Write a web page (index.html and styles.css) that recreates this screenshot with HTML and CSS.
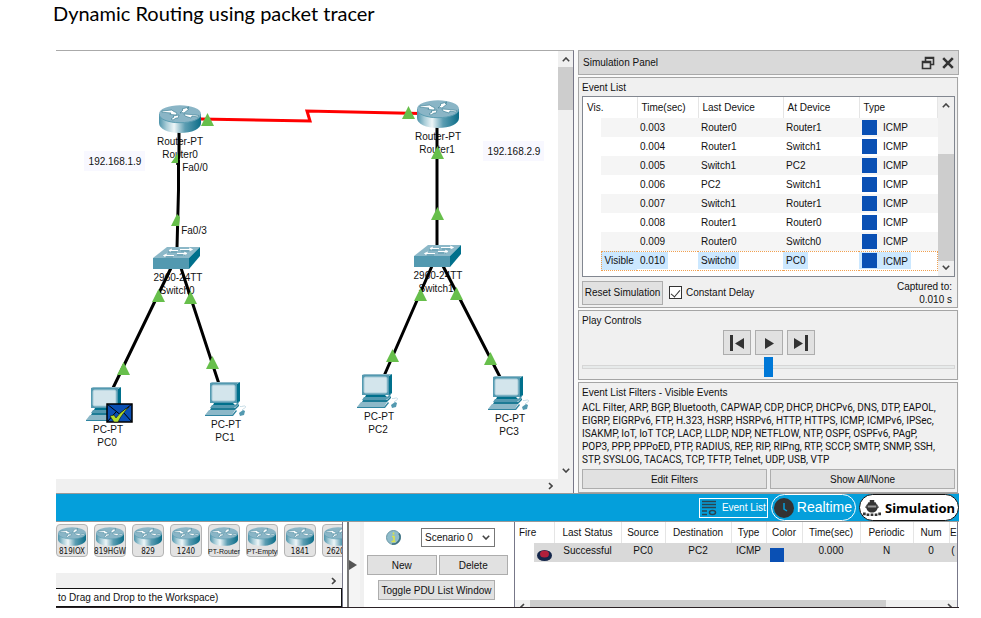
FILE: index.html
```html
<!DOCTYPE html>
<html lang="en">
<head>
<meta charset="utf-8">
<title>Dynamic Routing using packet tracer</title>
<link rel="stylesheet" href="styles.css">
</head>
<body>
<svg width="0" height="0" class="defs" aria-hidden="true">
  <defs>
    <linearGradient id="metal" x1="0" x2="1" y1="0" y2="0">
      <stop offset="0" stop-color="#4d93aa"/>
      <stop offset=".18" stop-color="#a9cdd8"/>
      <stop offset=".36" stop-color="#eef6f8"/>
      <stop offset=".62" stop-color="#5c9db2"/>
      <stop offset="1" stop-color="#0b6d88"/>
    </linearGradient>
    <symbol id="router" viewBox="0 0 42 28">
      <path d="M0 9v9c0 6 9 10 21 10s21-4 21-10V9z" fill="url(#metal)"/>
      <ellipse cx="21" cy="9" rx="21" ry="8.700" fill="#8ab5c6"/>
      <path d="M0 9c0 5 9 8.700 21 8.700S42 14 42 9" fill="none" stroke="#5b9db2" stroke-width="1"/>
      <g fill="#fff" stroke="#31788f" stroke-width=".6">
        <path d="M3 6l10-1 1 1 4 2-1 2-6-.6 1-1.400-9-.8z"/>
        <path d="M21 8l3-3-1-1 7-2-2 1.500 2 .5-5 4-2-.5z"/>
        <path d="M25 9l7 .5 8 1-1 1.500-6-1-1 2-6-2z"/>
        <path d="M12 14l3-2-1-1 6-1-1 3-2 0-3 2z"/>
      </g>
    </symbol>
    <symbol id="switch" viewBox="0 0 47 22">
      <path d="M0 11L14 0h33L36 11z" fill="#8cb8c8"/>
      <path d="M0 11h36v11H0z" fill="#5399b0"/>
      <path d="M36 11L47 0v9L36 22z" fill="#00708c"/>
      <g fill="none" stroke="#fff" stroke-width="1">
        <path d="M16 3.500h9M19 2l-3 1.500 2 1.500M27 2.500h12M36 1l3.500 1.500L36 4"/>
        <path d="M11 8.500h10M14 7l-3.500 1.500L13 10M24 6.500h9M31 5l3 1.500-4 1.500"/>
      </g>
      <path d="M15 5h9M28 4h9M12 10h8M24 8h8" stroke="#2f7a92" stroke-width=".5"/>
    </symbol>
    <symbol id="pc" viewBox="0 0 42 34">
      <path d="M5 1l2-1h28l-3 2z" fill="#8cb8c8"/>
      <path d="M5 1h27v20H5z" fill="#5399b0"/>
      <path d="M32 2l3-2v19l-3 3z" fill="#00708c"/>
      <rect x="7" y="3" width="23" height="16" rx="1.500" fill="#d3e5ec" stroke="#a6cad7"/>
      <path d="M9 21h19l2 2H8z" fill="#00708c"/>
      <path d="M7 23h23l4-4-1 4-4 3H5z" fill="#5399b0"/>
      <path d="M6 26h24l4-4v2l-4 4H5z" fill="#1d7b95"/>
      <path d="M4 28h26l-3 5H0z" fill="#8cb8c8"/>
      <path d="M0 33h27l4-5 1 1-4 5H0z" fill="#2f84a0"/>
      <path d="M34 31l4-3 2 1-1 4-4 1z" fill="#5399b0"/>
      <path d="M37 28c2-2 4-2 3.500-3.500S37 25 35 24.500" fill="none" stroke="#b7d3de" stroke-width=".8"/>
    </symbol>
    <symbol id="up" viewBox="0 0 13 13"><path d="M6.500 0L13 13H0z" fill="#67bf4b"/></symbol>
    <symbol id="chev" viewBox="0 0 8 5"><path d="M.8.800L4 4 7.200.800" fill="none" stroke="#444" stroke-width="1.600"/></symbol>
  </defs>
</svg>

<h1>Dynamic Routing using packet tracer</h1>

<main class="app">
  <div class="upper">
    <section class="workspace" aria-label="Workspace">
      <div class="canvas">
        <svg width="502" height="427" viewBox="56 51 502 427">
          <rect x="84" y="151" width="61" height="20" fill="#f8f8ff"/>
          <rect x="483" y="141" width="61" height="20" fill="#f8f8ff"/>
          <g class="labels">
            <text x="115" y="165">192.168.1.9</text>
            <text x="514" y="155">192.168.2.9</text>
            <text x="180" y="145">Router-PT</text>
            <text x="180" y="158">Router0</text>
            <text x="438" y="140">Router-PT</text>
            <text x="437" y="153">Router1</text>
            <text x="178" y="281">2960-24TT</text>
            <text x="177" y="294">Switch0</text>
            <text x="438" y="279">2960-24TT</text>
            <text x="436" y="292">Switch1</text>
            <text x="108" y="433">PC-PT</text>
            <text x="107" y="446">PC0</text>
            <text x="226" y="428">PC-PT</text>
            <text x="225" y="441">PC1</text>
            <text x="379" y="420">PC-PT</text>
            <text x="378" y="433">PC2</text>
            <text x="510" y="422">PC-PT</text>
            <text x="509" y="435">PC3</text>
          </g>
          <rect x="181" y="158" width="30" height="15" fill="#fff"/>
          <g fill="none" stroke="#000" stroke-width="3">
            <path d="M179 130V155L177.500 165M178.500 160V190L177 248"/>
            <path d="M437 125V248"/>
            <path d="M171 268L113 388M181 268L219 384"/>
            <path d="M432 266L384 376M443 266L500 377"/>
          </g>
          <path d="M200 119L310 121 307 111 420 113.500" fill="none" stroke="#f00" stroke-width="3"/>
          <g class="labels">
            <text x="195" y="171">Fa0/0</text>
            <text x="194" y="234">Fa0/3</text>
          </g>
          <use href="#router" x="159" y="105" width="42" height="28"/>
          <use href="#router" x="417" y="100" width="42" height="28"/>
          <use href="#switch" x="153" y="247" width="47" height="22"/>
          <use href="#switch" x="414" y="245" width="47" height="22"/>
          <use href="#pc" x="86" y="387" width="42" height="34"/>
          <use href="#pc" x="205" y="382" width="42" height="34"/>
          <use href="#pc" x="357" y="374" width="42" height="34"/>
          <use href="#pc" x="488" y="376" width="42" height="34"/>
          <path d="M178 153v10h-7zM177 214l3 3-1 9h-8z" fill="#67bf4b"/>
          <use href="#up" x="201" y="113" width="13" height="13"/>
          <use href="#up" x="402" y="106" width="13" height="13"/>
          <use href="#up" x="431" y="146" width="13" height="13"/>
          <use href="#up" x="431" y="207" width="13" height="13"/>
          <use href="#up" x="152" y="289" width="13" height="13"/>
          <use href="#up" x="184" y="291" width="13" height="13"/>
          <use href="#up" x="117" y="362" width="13" height="13"/>
          <use href="#up" x="206" y="356" width="13" height="13"/>
          <use href="#up" x="414" y="288" width="13" height="13"/>
          <use href="#up" x="450" y="287" width="13" height="13"/>
          <use href="#up" x="386" y="349" width="13" height="13"/>
          <use href="#up" x="484" y="352" width="13" height="13"/>
          <rect x="107" y="404" width="25" height="18" fill="#0a4fb3" stroke="#000" stroke-width="1.500"/>
          <path d="M107 404l12.500 10L132 404M107 422l9-10M132 422l-9-10" fill="none" stroke="#000"/>
          <path d="M110 416l4-1 2 3c3-4 7-8 13-11-5 5-8 9-11 15h-4z" fill="#b2dc2c" stroke="#000" stroke-width=".5"/>
        </svg>
      </div>
      <div class="vscroll">
        <svg width="8" height="5" class="flip"><use href="#chev"/></svg>
        <div class="vthumb short"></div>
        <svg width="8" height="5"><use href="#chev"/></svg>
      </div>
      <div class="hscroll"><svg width="5" height="8" viewBox="0 0 5 8"><path d="M1 1l3 3-3 3" fill="none" stroke="#444" stroke-width="1.600"/></svg></div>
    </section>

    <aside class="panel">
      <header class="titlebar">
        <h2>Simulation Panel</h2>
        <button class="plain" aria-label="Undock"><svg width="14" height="14" viewBox="0 0 14 14"><path d="M4.500 5V1.500h8v7H10M4.500 2.300h8M1.500 5.500h8v7h-8zM1.500 6.500h8" fill="none" stroke="#333" stroke-width="1.600"/></svg></button>
        <button class="plain" aria-label="Close"><svg width="12" height="12" viewBox="0 0 12 12"><path d="M1.200 1.200l9.600 9.600M10.800 1.200l-9.600 9.600" stroke="#333" stroke-width="2.600"/></svg></button>
      </header>

      <section class="box events">
        <h3>Event List</h3>
        <div class="listframe">
          <table class="eventtable">
            <colgroup><col class="c-in"><col class="c-vis"><col class="c-time"><col class="c-last"><col class="c-at"><col class="c-type"></colgroup>
            <thead><tr><th colspan="2">Vis.</th><th>Time(sec)</th><th>Last Device</th><th>At Device</th><th>Type</th></tr></thead>
            <tbody>
              <tr><td></td><td></td><td>0.003</td><td>Router0</td><td>Router1</td><td><i class="swatch"></i><span>ICMP</span></td></tr>
              <tr><td></td><td></td><td>0.004</td><td>Router1</td><td>Switch1</td><td><i class="swatch"></i><span>ICMP</span></td></tr>
              <tr><td></td><td></td><td>0.005</td><td>Switch1</td><td>PC2</td><td><i class="swatch"></i><span>ICMP</span></td></tr>
              <tr><td></td><td></td><td>0.006</td><td>PC2</td><td>Switch1</td><td><i class="swatch"></i><span>ICMP</span></td></tr>
              <tr><td></td><td></td><td>0.007</td><td>Switch1</td><td>Router1</td><td><i class="swatch"></i><span>ICMP</span></td></tr>
              <tr><td></td><td></td><td>0.008</td><td>Router1</td><td>Router0</td><td><i class="swatch"></i><span>ICMP</span></td></tr>
              <tr><td></td><td></td><td>0.009</td><td>Router0</td><td>Switch0</td><td><i class="swatch"></i><span>ICMP</span></td></tr>
              <tr class="current"><td></td><td>Visible</td><td><b>0.010</b></td><td><b>Switch0</b></td><td><b>PC0</b></td><td><b><i class="swatch"></i><span>ICMP</span></b></td></tr>
            </tbody>
          </table>
          <div class="vscroll">
            <svg width="8" height="5" class="flip"><use href="#chev"/></svg>
            <div class="vthumb low"></div>
            <svg width="8" height="5"><use href="#chev"/></svg>
          </div>
        </div>
        <div class="resetrow">
          <button class="btn">Reset Simulation</button>
          <label class="check"><input type="checkbox" checked><span>Constant Delay</span></label>
          <p class="captured">Captured to:<br>0.010 s</p>
        </div>
      </section>

      <section class="box play">
        <h3>Play Controls</h3>
        <div class="playrow">
          <button class="btn" aria-label="Step back"><svg width="14" height="16" viewBox="0 0 14 16"><path d="M0 0h3v16H0zM14 3v11L5 8.500z" fill="#333"/></svg></button>
          <button class="btn" aria-label="Play"><svg width="14" height="16" viewBox="0 0 14 16"><path d="M3 3v11l9-5.500z" fill="#333"/></svg></button>
          <button class="btn" aria-label="Step forward"><svg width="14" height="16" viewBox="0 0 14 16"><path d="M0 3v11l9-5.500zM11 0h3v16h-3z" fill="#333"/></svg></button>
        </div>
        <input class="speed" type="range" min="0" max="100" value="50" aria-label="Play speed">
      </section>

      <section class="box filters">
        <h3>Event List Filters - Visible Events</h3>
        <p>ACL Filter, ARP, BGP, Bluetooth, CAPWAP, CDP, DHCP, DHCPv6, DNS, DTP, EAPOL,<br>EIGRP, EIGRPv6, FTP, H.323, HSRP, HSRPv6, HTTP, HTTPS, ICMP, ICMPv6, IPSec,<br>ISAKMP, IoT, IoT TCP, LACP, LLDP, NDP, NETFLOW, NTP, OSPF, OSPFv6, PAgP,<br>POP3, PPP, PPPoED, PTP, RADIUS, REP, RIP, RIPng, RTP, SCCP, SMTP, SNMP, SSH,<br>STP, SYSLOG, TACACS, TCP, TFTP, Telnet, UDP, USB, VTP</p>
        <div class="filterbtns"><button class="btn">Edit Filters</button><button class="btn">Show All/None</button></div>
      </section>
    </aside>
  </div>

  <nav class="modebar">
    <button class="eventlist"><svg width="15" height="16" viewBox="0 0 15 16"><path d="M0 1.500h14M0 4.500h14M0 7.500h14M0 11h5M0 14.500h5" stroke="#2b4450" stroke-width="1.500"/><ellipse cx="10.500" cy="12.500" rx="3" ry="2" fill="none" stroke="#2b4450" stroke-width="1.500"/></svg>Event List</button>
    <button class="mode realtime"><svg width="20" height="20" viewBox="0 0 20 20"><circle cx="10" cy="10" r="10" fill="#333"/><path d="M10 5v6l3 2" fill="none" stroke="#079fdb" stroke-width="1.500"/></svg>Realtime</button>
    <button class="mode simulation"><svg width="18" height="18" viewBox="0 0 20 18"><path d="M7.500 0h5v2.500h-5zM6 2.500h8l2 4H4zM4 9h12c0 3-2.500 5-6 5s-6-2-6-5z" fill="#333"/><path d="M4.500 5.500v4M15.500 5.500v4M2.500 8h15" stroke="#333" stroke-width="1.500"/><path d="M0 14h3v3H0zM4 15h3v3H4zM8.500 15h3v3h-3zM13 15h3v3h-3zM17 14h3v3h-3z" fill="#333"/></svg>Simulation</button>
  </nav>

  <div class="lower">
    <section class="devices">
      <div class="tiles">
        <button class="tile"><svg width="28" height="19"><use href="#router"/></svg>819IOX</button>
        <button class="tile"><svg width="28" height="19"><use href="#router"/></svg>819HGW</button>
        <button class="tile"><svg width="28" height="19"><use href="#router"/></svg>829</button>
        <button class="tile"><svg width="28" height="19"><use href="#router"/></svg>1240</button>
        <button class="tile long"><svg width="28" height="19"><use href="#router"/></svg>PT-Router</button>
        <button class="tile long"><svg width="28" height="19"><use href="#router"/></svg>PT-Empty</button>
        <button class="tile"><svg width="28" height="19"><use href="#router"/></svg>1841</button>
        <button class="tile"><svg width="28" height="19"><use href="#router"/></svg>2620X</button>
      </div>
      <div class="hscroll"><svg width="5" height="8" viewBox="0 0 5 8"><path d="M1 1l3 3-3 3" fill="none" stroke="#444" stroke-width="1.600"/></svg></div>
      <p class="hint">to Drag and Drop to the Workspace)</p>
    </section>
    <button class="handle" aria-label="Expand"><svg width="8" height="10" viewBox="0 0 8 10"><path d="M0 0l8 5-8 5z" fill="#555"/></svg></button>
    <section class="scenario">
      <div class="row">
        <svg width="15" height="15" viewBox="0 0 15 15"><circle cx="7.500" cy="7.500" r="7" fill="#8fbccb" stroke="#6b97a5"/><path d="M13 3.500a7 7 0 0 1-7 10.500" fill="none" stroke="#3d7080" stroke-width="1.500"/><path d="M7.500 2.500v2M6 6.500h2V11M5.500 11.500h4" stroke="#dbe24a" stroke-width="1.600" fill="none"/></svg>
        <span class="pick"><select aria-label="Scenario"><option>Scenario 0</option></select><svg width="8" height="5"><use href="#chev"/></svg></span>
      </div>
      <div class="row pair"><button class="btn">New</button><button class="btn">Delete</button></div>
      <button class="btn toggle">Toggle PDU List Window</button>
    </section>
    <section class="pdus">
      <table class="pdutable">
        <colgroup><col class="p-in"><col class="p-fire"><col class="p-status"><col class="p-src"><col class="p-dst"><col class="p-type"><col class="p-color"><col class="p-time"><col class="p-per"><col class="p-num"><col></colgroup>
        <thead><tr><th colspan="2">Fire</th><th>Last Status</th><th>Source</th><th>Destination</th><th>Type</th><th>Color</th><th>Time(sec)</th><th>Periodic</th><th>Num</th><th>E</th></tr></thead>
        <tbody><tr><td></td><td><svg width="15" height="12" viewBox="0 0 15 12"><ellipse cx="7.500" cy="6.500" rx="7.500" ry="5.500" fill="#14264a"/><ellipse cx="7.500" cy="5" rx="4.500" ry="3.500" fill="#b0203c"/></svg></td><td>Successful</td><td>PC0</td><td>PC2</td><td>ICMP</td><td><i class="swatch"></i></td><td>0.000</td><td>N</td><td>0</td><td>(</td></tr></tbody>
      </table>
      <div class="pduscroll">
        <svg width="5" height="8" viewBox="0 0 5 8"><path d="M4 1L1 4l3 3" fill="none" stroke="#444" stroke-width="1.600"/></svg>
        <div class="hthumb"></div>
        <svg width="5" height="8" viewBox="0 0 5 8"><path d="M1 1l3 3-3 3" fill="none" stroke="#444" stroke-width="1.600"/></svg>
      </div>
    </section>
  </div>
</main>
</body>
</html>
```
FILE: styles.css
```css
* { box-sizing: border-box; }

body {
  margin: 0;
  padding: 0 22px 0 56px;
  background: #fff;
  color: #111;
  font: 10px/13px "Liberation Sans", Arial, sans-serif;
}

h1, h2, h3, p { margin: 0; font-weight: normal; font-size: inherit; }
h1 { height: 50px; margin-left: -3px; font: 20px/26px Lato, sans-serif; color: #000; }
button, select, input { font: inherit; color: inherit; margin: 0; }
svg { display: block; flex: none; }
.defs { position: absolute; }

.app { border-bottom: 1px solid #2b2226; }

.upper { display: flex; gap: 4px; border-bottom: 1px solid #999; background: #fafafa; }

/* Workspace */
.workspace {
  flex: 1;
  min-width: 0;
  display: grid;
  grid-template: 1fr 14px / minmax(0, 1fr) 15px;
  border-top: 1px solid #aaa;
  border-right: 1px solid #778;
  background: #fff;
}
.canvas { overflow: hidden; }
.labels { font-size: 10px; text-anchor: middle; fill: #111; }
.vscroll {
  display: flex;
  flex-direction: column;
  align-items: center;
  padding: 6px 0;
  background: #f0f0f0;
}
.vscroll .flip { transform: rotate(180deg); }
.vthumb { width: 100%; background: #cdcdcd; }
.vthumb.short { height: 43px; margin: 5px 0 auto; }
.vthumb.low { height: 107px; margin: auto 0 4px; }
.hscroll {
  grid-column: 1 / -1;
  display: flex;
  align-items: center;
  justify-content: flex-end;
  height: 14px;
  padding-right: 20px;
  background: #f0f0f0;
}

/* Simulation panel */
.panel { width: 381px; display: flex; flex-direction: column; gap: 2px; }
.titlebar {
  display: flex;
  align-items: center;
  gap: 7px;
  height: 25px;
  padding: 0 4px;
  background: #d9d9d9;
  border: 1px solid #aaa;
}
.titlebar h2 { flex: 1; }
.plain { border: 0; padding: 0; background: none; }
.box { margin-right: 1px; padding: 3px 2px 0 3px; background: #f0f0f0; border: 1px solid #a5a5a5; }
.btn {
  display: flex;
  align-items: center;
  justify-content: center;
  padding: 0;
  background: #e1e1e1;
  border: 1px solid #adadad;
  white-space: nowrap;
}

.events { height: 231px; }
.listframe {
  display: flex;
  height: 181px;
  margin-top: 2px;
  background: #fff;
  border: 1px solid #828790;
}
.eventtable { flex: 1; align-self: flex-start; }
table { border-collapse: collapse; table-layout: fixed; }
th, td { padding: 0; text-align: left; font-weight: normal; white-space: nowrap; }
.eventtable th { height: 21px; padding-left: 4px; border-right: 1px solid #e5e5e5; }
.eventtable td { height: 19px; padding-left: 3px; }
.eventtable tbody tr:nth-child(odd) td:not(:first-child) { background: #f5f5f5; }
.c-in { width: 18px; }
.c-vis { width: 36px; }
.c-time { width: 61px; }
.c-last { width: 85px; }
.c-at { width: 76px; }
.listframe .vscroll { width: 16px; }
.swatch {
  display: inline-block;
  width: 15px;
  height: 15px;
  margin-right: 6px;
  vertical-align: middle;
  background: #0a50b4;
}
.eventtable span { vertical-align: middle; }
.eventtable .current td { border-top: 1px dotted #f0a050; border-bottom: 1px dotted #f0a050; }
.eventtable .current td:first-child { border: 0; }
.eventtable .current td:nth-child(2) { border-left: 1px dotted #f0a050; background: #cce8ff; }
.eventtable .current td:last-child { border-right: 1px dotted #f0a050; }
.current b {
  display: inline-block;
  margin-left: -3px;
  padding: 0 3px;
  line-height: 17px;
  font-weight: normal;
  background: #cce8ff;
}
.resetrow { display: flex; align-items: center; height: 31px; gap: 6px; }
.resetrow .btn { width: 81px; height: 24px; }
.check { display: flex; align-items: center; gap: 4px; flex: 1; }
.check input {
  appearance: none;
  display: grid;
  place-items: center;
  width: 13px;
  height: 13px;
  background: #fff;
  border: 1px solid #333;
}
.check input:checked::after {
  content: "";
  width: 4px;
  height: 8px;
  border: solid #333;
  border-width: 0 1px 1px 0;
  transform: rotate(40deg);
}
.captured { text-align: right; padding-right: 3px; }

.play { height: 70px; }
.playrow { display: flex; justify-content: center; gap: 4px; margin-top: 3px; }
.playrow .btn { width: 28px; height: 25px; }
.speed { appearance: none; display: block; width: 100%; height: 20px; margin-top: 2px; background: none; }
.speed::-webkit-slider-runnable-track {
  height: 4px;
  background: #e7eaea;
  border: 1px solid #d6d6d6;
}
.speed::-webkit-slider-thumb {
  appearance: none;
  width: 9px;
  height: 20px;
  margin-top: -9px;
  background: #0078d7;
}

.filters { padding-bottom: 3px; }
.filters p { margin: 2px 0 3px; white-space: nowrap; font-family: Roboto, "Liberation Sans", sans-serif; }
.filterbtns { display: grid; grid-template-columns: 1fr 1fr; gap: 3px; }
.filterbtns .btn { height: 20px; }

/* Mode bar */
.modebar {
  display: flex;
  align-items: center;
  justify-content: flex-end;
  gap: 3px;
  height: 27px;
  background: #049fdb;
}
.modebar button { display: flex; align-items: center; }
.eventlist {
  gap: 5px;
  height: 20px;
  padding: 0 1px 0 2px;
  color: #fff;
  background: none;
  border: 1px solid #fff;
}
.mode { height: 27px; border-radius: 14px; border: 1px solid #fff; }
.modebar .realtime { gap: 3px; padding: 0 3px 0 2px; color: #fff; background: none; font-size: 14px; }
.modebar .simulation {
  gap: 4px;
  padding: 0 3px;
  color: #000;
  background: #fff;
  border-color: #111;
  font: bold 13px/16px "Noto Sans", sans-serif;
}

/* Lower area */
.lower { display: flex; height: 86px; border-top: 1px solid #999; }
.devices { flex: 1; min-width: 0; border-right: 1px solid #778; overflow: hidden; }
.tiles { display: flex; gap: 6px; height: 51px; padding-top: 2px; }
.tile {
  flex: none;
  display: flex;
  flex-direction: column;
  align-items: center;
  gap: 1px;
  width: 32px;
  height: 33px;
  padding: 2px 0 0;
  background: #e3e3e3;
  border: 1px solid #b4b4b4;
  border-radius: 4px;
  font: 8px/9px "DejaVu Sans Condensed", "DejaVu Sans", sans-serif;
  white-space: nowrap;
}
.tile.long { font: 7px/9px "Liberation Sans", sans-serif; }
.devices .hscroll { height: 15px; padding-right: 6px; }
.hint { height: 19px; padding-left: 2px; line-height: 17px; border: 1px solid #111; border-left: 0; }
.handle {
  width: 13px;
  margin-left: 4px;
  padding: 0;
  background: #f4f4f4;
  border: 0;
  border-left: 2px solid #777;
}
.scenario { width: 154px; padding: 6px 6px 0 3px; border-left: 4px solid #f0f0f0; }
.row { display: flex; align-items: center; justify-content: flex-end; gap: 20px; margin-bottom: 8px; padding-right: 13px; }
.pick { display: flex; align-items: center; width: 74px; height: 19px; padding-right: 4px; border: 1px solid #777; }
.pick select { appearance: none; flex: 1; min-width: 0; padding: 0 0 0 3px; border: 0; background: none; }
.row.pair { gap: 2px; padding: 0; margin-bottom: 5px; }
.pair .btn { flex: 1; height: 20px; }
.toggle { width: 117px; height: 20px; margin-left: 11px; }
.pdus {
  display: flex;
  flex-direction: column;
  justify-content: space-between;
  width: 444px;
  margin-right: 1px;
  overflow: hidden;
  border-left: 1px solid #778;
  border-right: 1px solid #778;
}
.pdutable { width: 100%; text-align: center; }
.pdutable th { height: 21px; border-right: 1px solid #e5e5e5; text-align: center; }
.pdutable th:first-child { text-align: left; padding-left: 4px; }
.pdutable th:last-child { border: 0; }
.pdutable td { height: 19px; padding-bottom: 4px; text-align: center; }
.pdutable td:not(:first-child) { background: #d9d9d9; }
.pdutable td:nth-child(2) { padding: 4px 0 0 3px; }
.pdutable td:nth-child(7) { padding: 4px 0 0 4px; text-align: left; line-height: 15px; }
.pdutable .swatch { display: block; width: 14px; height: 14px; }
.p-in { width: 19px; }
.p-fire { width: 20px; }
.p-status { width: 67px; }
.p-src { width: 44px; }
.p-dst { width: 66px; }
.p-type { width: 35px; }
.p-color { width: 36px; }
.p-time { width: 58px; }
.p-per { width: 53px; }
.p-num { width: 36px; }
.pduscroll { display: flex; gap: 5px; height: 7px; padding: 0 5px; overflow: hidden; background: #f0f0f0; }
.pduscroll svg { margin-top: 3px; }
.hthumb { width: 356px; margin-right: auto; background: #cdcdcd; }
```
